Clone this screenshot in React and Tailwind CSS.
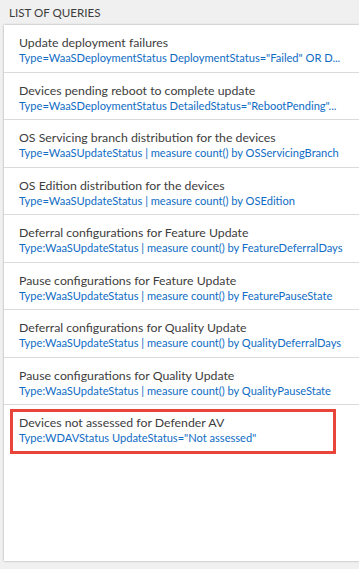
import React from "react";

const rows = [
  ["Update deployment failures", 'Type=WaaSDeploymentStatus DeploymentStatus="Failed" OR D...'],
  ["Devices pending reboot to complete update", 'Type=WaaSDeploymentStatus DetailedStatus="RebootPending"...'],
  ["OS Servicing branch distribution for the devices", "Type=WaaSUpdateStatus | measure count() by OSServicingBranch"],
  ["OS Edition distribution for the devices", "Type=WaaSUpdateStatus | measure count() by OSEdition"],
  ["Deferral configurations for Feature Update", "Type:WaaSUpdateStatus | measure count() by FeatureDeferralDays"],
  ["Pause configurations for Feature Update", "Type:WaaSUpdateStatus | measure count() by FeaturePauseState"],
  ["Deferral configurations for Quality Update", "Type:WaaSUpdateStatus | measure count() by QualityDeferralDays"],
  ["Pause configurations for Quality Update", "Type:WaaSUpdateStatus | measure count() by QualityPauseState"],
  ["Devices not assessed for Defender AV", 'Type:WDAVStatus UpdateStatus="Not assessed"'],
];

export default function App() {
  return (
    <div
      className="w-[359px] h-[569px] bg-[#f0f0f0] overflow-hidden"
      style={{ fontFamily: '"Lato", "Liberation Sans", sans-serif' }}
    >
      <div className="h-[25px] pl-[9px] flex items-center text-[11.6px] text-[#3c3c3c]">
        LIST OF QUERIES
      </div>
      <div className="ml-[4px] h-[536px] bg-white shadow-[0_0_2px_rgba(0,0,0,0.35)]">
        {rows.map(([title, query], i) => {
          const last = i === rows.length - 1;
          return (
            <div
              key={i}
              className={
                "relative h-[47.5px] pl-[15px] pt-[10px] whitespace-nowrap " +
                (last ? "" : "border-b border-[#dadada]")
              }
            >
              <div className="text-[12.3px] leading-[16px] text-[#3d3d3d]">{title}</div>
              <div className="text-[11.1px] leading-[14px] text-[#0f6cc4]">{query}</div>
              {last && (
                <div className="absolute left-[6px] top-[4px] w-[326px] h-[45px] border-[3px] border-[#e8443a]" />
              )}
            </div>
          );
        })}
      </div>
    </div>
  );
}
